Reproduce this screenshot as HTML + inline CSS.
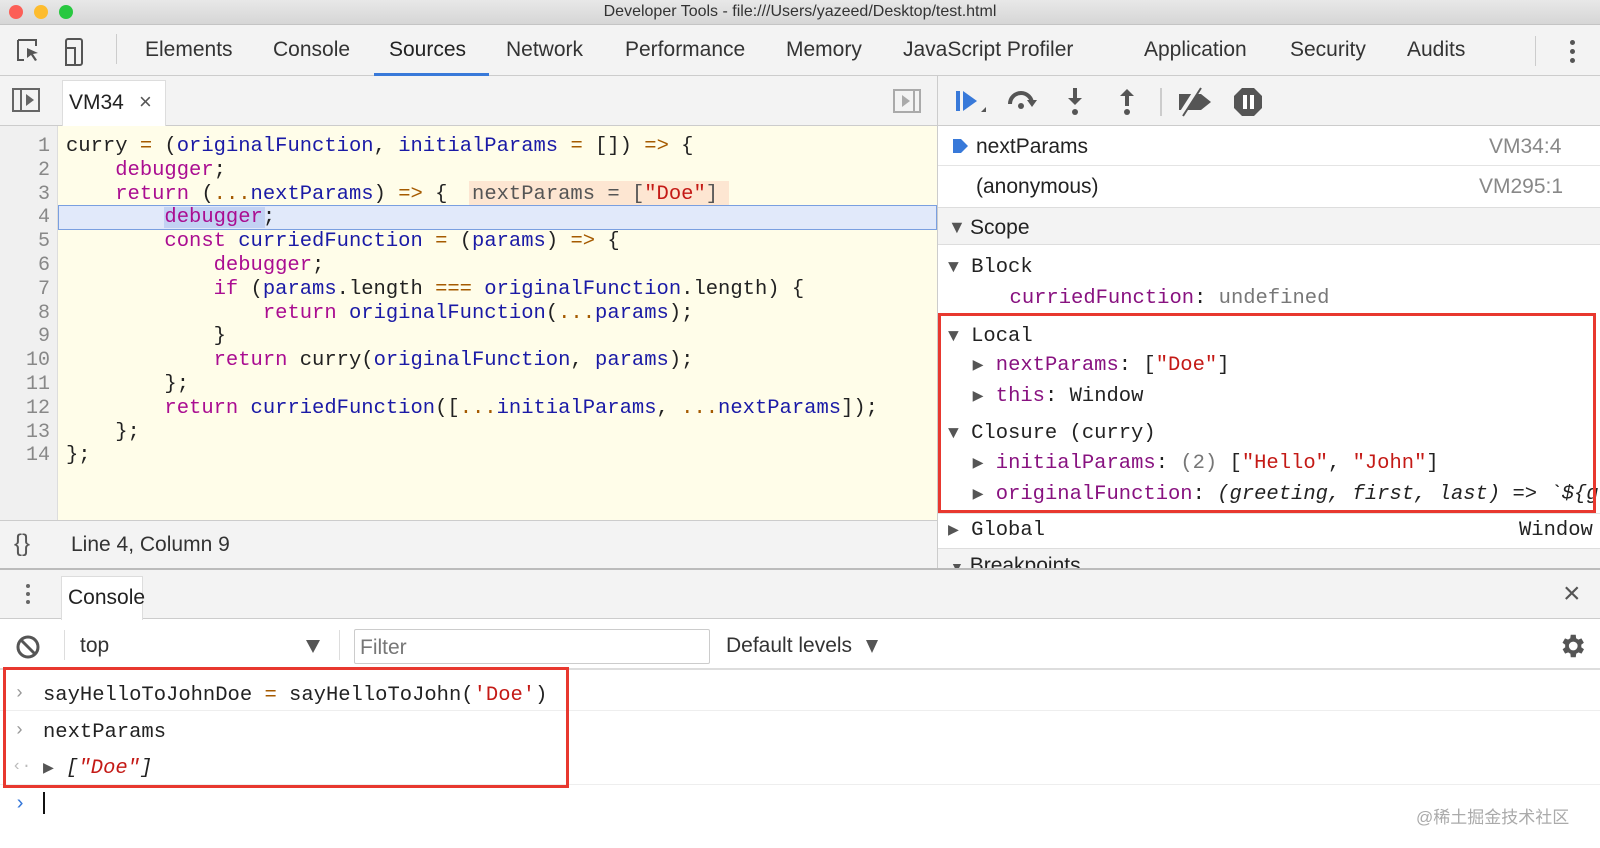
<!DOCTYPE html>
<html><head><meta charset="utf-8"><style>
*{margin:0;padding:0;box-sizing:border-box}
body{width:1600px;height:848px;overflow:hidden;background:#fff;font-family:"Liberation Sans",sans-serif;color:#333;position:relative}
.a{position:absolute;white-space:pre}
.m{font-family:"Liberation Mono",monospace;font-size:20.5px}
.s{font-size:21px}
.kw{color:#aa0d91}.v{color:#1c00cf}.id{color:#1a1aa6}.op{color:#a55a00}.str{color:#c41a16}.pu{color:#881280}.gr{color:#777}
.t{font-size:18px;color:#555}
</style></head><body>
<div class="a" style="left:0;top:0;width:1600px;height:25px;background:linear-gradient(#e8e8e8,#d6d6d6);border-bottom:1px solid #c4c4c4"></div>
<div class="a" style="left:9px;top:5px;width:14px;height:14px;border-radius:50%;background:#fc5f57"></div>
<div class="a" style="left:34px;top:5px;width:14px;height:14px;border-radius:50%;background:#fdbc2e"></div>
<div class="a" style="left:59px;top:5px;width:14px;height:14px;border-radius:50%;background:#28c840"></div>
<div class="a" style="left:0;top:3px;width:1600px;text-align:center;font-size:16px;color:#333">Developer Tools - file:///Users/yazeed/Desktop/test.html</div>
<div class="a" style="left:0;top:25px;width:1600px;height:51px;background:#f3f3f3;border-bottom:1px solid #ccc"></div>
<svg class="a" style="left:14px;top:36px" width="90" height="32" viewBox="0 0 90 32"><path d="M4 4h18v6M4 4v20h6" fill="none" stroke="#555" stroke-width="2"/><path d="M13 12l11 5-5 1 4 6-2 1-4-6-4 3z" fill="#555"/><rect x="52" y="3" width="16" height="26" rx="2" fill="none" stroke="#555" stroke-width="2"/><rect x="52" y="12" width="9" height="17" fill="#f3f3f3" stroke="#555" stroke-width="2"/></svg>
<div class="a" style="left:116px;top:34px;width:1px;height:30px;background:#ccc"></div>
<div class="a s" style="left:145px;top:38px;color:#333">Elements</div>
<div class="a s" style="left:273px;top:38px">Console</div>
<div class="a s" style="left:389px;top:38px;color:#222">Sources</div>
<div class="a" style="left:374px;top:73px;width:115px;height:3px;background:#3879d9"></div>
<div class="a s" style="left:506px;top:38px">Network</div>
<div class="a s" style="left:625px;top:38px">Performance</div>
<div class="a s" style="left:786px;top:38px">Memory</div>
<div class="a s" style="left:903px;top:38px">JavaScript Profiler</div>
<div class="a s" style="left:1144px;top:38px">Application</div>
<div class="a s" style="left:1290px;top:38px">Security</div>
<div class="a s" style="left:1407px;top:38px">Audits</div>
<div class="a" style="left:1535px;top:36px;width:1px;height:30px;background:#ccc"></div>
<div class="a" style="left:1570px;top:40px;width:5px;height:5px;border-radius:50%;background:#555;box-shadow:0 9px #555,0 18px #555"></div>
<div class="a" style="left:0;top:76px;width:937px;height:50px;background:#f3f3f3;border-bottom:1px solid #ccc"></div>
<div class="a" style="left:12px;top:88px;width:28px;height:24px;border:2px solid #666"></div>
<div class="a" style="left:20px;top:88px;width:2px;height:24px;background:#666"></div>
<div class="a" style="left:26px;top:94px;border-left:8px solid #666;border-top:6px solid transparent;border-bottom:6px solid transparent"></div>
<div class="a" style="left:62px;top:80px;width:104px;height:47px;background:#fff;border:1px solid #ddd;border-bottom:none"></div>
<div class="a s" style="left:69px;top:91px;color:#222">VM34</div>
<div class="a" style="left:139px;top:89px;font-size:22px;color:#555">×</div>
<div class="a" style="left:893px;top:89px;width:28px;height:24px;border:2px solid #aaa"></div>
<div class="a" style="left:913px;top:89px;width:2px;height:24px;background:#aaa"></div>
<div class="a" style="left:902px;top:95px;border-left:8px solid #aaa;border-top:6px solid transparent;border-bottom:6px solid transparent"></div>
<div class="a" style="left:938px;top:76px;width:662px;height:50px;background:#f3f3f3;border-bottom:1px solid #ccc"></div>
<svg class="a" style="left:950px;top:84px" width="320" height="36" viewBox="0 0 320 36">
<rect x="6" y="7" width="4" height="20" fill="#3879d9"/><path d="M13 7l14 10-14 10z" fill="#3879d9"/><path d="M31 28l5-5v5z" fill="#555"/>
<path d="M60 20a11 11 0 0 1 22 0" fill="none" stroke="#555" stroke-width="4"/><path d="M77 16h10l-5 7z" fill="#555"/><circle cx="71" cy="22" r="3" fill="#555"/>
<rect x="123" y="4" width="4" height="12" fill="#555"/><path d="M118 14h14l-7 7z" fill="#555"/><circle cx="125" cy="28" r="3" fill="#555"/>
<rect x="175" y="10" width="4" height="12" fill="#555"/><path d="M170 12h14l-7-7z" fill="#555"/><circle cx="177" cy="28" r="3" fill="#555"/>
<line x1="211" y1="4" x2="211" y2="32" stroke="#ccc" stroke-width="2"/>
<path d="M229 10h22l10 8-10 8h-22z" fill="#555"/><line x1="230" y1="32" x2="248" y2="4" stroke="#f3f3f3" stroke-width="5"/><line x1="233" y1="32" x2="251" y2="4" stroke="#555" stroke-width="2"/>
<path d="M292 4h12l8 8v12l-8 8h-12l-8-8v-12z" fill="#555"/><rect x="293" y="11" width="4" height="14" fill="#fff"/><rect x="300" y="11" width="4" height="14" fill="#fff"/>
</svg>
<div class="a" style="left:0;top:126px;width:58px;height:394px;background:#f0f0f0;border-right:1px solid #ddd"></div>
<div class="a" style="left:58px;top:126px;width:879px;height:394px;background:#fffde9"></div>
<div class="a" style="left:58px;top:205px;width:879px;height:25px;background:#e1e9fa;border:1.5px solid #7a9fe0"></div>
<div class="a" style="left:164px;top:207px;width:101px;height:21px;background:#c3d2f3"></div>
<div class="a" style="left:469px;top:181px;width:260px;height:24px;background:#fde6d2"></div>
<div class="a m" style="left:66px;top:135px;line-height:23.8px;color:#222">curry <span class="op">=</span> (<span class="id">originalFunction</span>, <span class="id">initialParams</span> <span class="op">=</span> []) <span class="op">=&gt;</span> {
    <span class="kw">debugger</span>;
    <span class="kw">return</span> (<span class="op">...</span><span class="id">nextParams</span>) <span class="op">=&gt;</span> {  <span style="color:#555">nextParams = [<span class="str">"Doe"</span>]</span>
        <span class="kw">debugger</span>;
        <span class="kw">const</span> <span class="id">curriedFunction</span> <span class="op">=</span> (<span class="id">params</span>) <span class="op">=&gt;</span> {
            <span class="kw">debugger</span>;
            <span class="kw">if</span> (<span class="id">params</span>.length <span class="op">===</span> <span class="id">originalFunction</span>.length) {
                <span class="kw">return</span> <span class="id">originalFunction</span>(<span class="op">...</span><span class="id">params</span>);
            }
            <span class="kw">return</span> curry(<span class="id">originalFunction</span>, <span class="id">params</span>);
        };
        <span class="kw">return</span> <span class="id">curriedFunction</span>([<span class="op">...</span><span class="id">initialParams</span>, <span class="op">...</span><span class="id">nextParams</span>]);
    };
};</div>
<div class="a" style="left:0;top:135px;width:50px;text-align:right;font-family:'Liberation Mono',monospace;font-size:20px;line-height:23.8px;color:#888">1
2
3
4
5
6
7
8
9
10
11
12
13
14</div>
<div class="a" style="left:0;top:520px;width:937px;height:48px;background:#f3f3f3;border-top:1px solid #ccc"></div>
<div class="a" style="left:14px;top:530px;font-size:24px;color:#555">{}</div>
<div class="a s" style="left:71px;top:533px;color:#333">Line 4, Column 9</div>
<div class="a" style="left:937px;top:76px;width:1px;height:492px;background:#ccc"></div>
<div class="a" style="left:953px;top:139px;width:8px;height:14px;background:#3879d9"></div>
<div class="a" style="left:961px;top:139px;border-left:7px solid #3879d9;border-top:7px solid transparent;border-bottom:7px solid transparent"></div>
<div class="a s" style="left:976px;top:135px;color:#222">nextParams</div>
<div class="a s" style="left:1489px;top:135px;color:#888">VM34:4</div>
<div class="a" style="left:938px;top:165px;width:662px;height:1px;background:#e4e4e4"></div>
<div class="a s" style="left:976px;top:175px;color:#222">(anonymous)</div>
<div class="a s" style="left:1479px;top:175px;color:#888">VM295:1</div>
<div class="a" style="left:938px;top:207px;width:662px;height:38px;background:#f3f3f3;border-top:1px solid #ddd;border-bottom:1px solid #ddd"></div>
<div class="a t" style="left:948px;top:217px">▼</div>
<div class="a s" style="left:970px;top:216px;color:#222">Scope</div>
<div class="a m" style="left:948px;top:256px;color:#222"><span class="t">▼</span> Block</div>
<div class="a m" style="left:948px;top:287px;color:#222">     <span class="pu">curriedFunction</span>: <span class="gr">undefined</span></div>
<div class="a m" style="left:948px;top:325px;color:#222"><span class="t">▼</span> Local</div>
<div class="a m" style="left:948px;top:354px;color:#222">  <span class="t">▶</span> <span class="pu">nextParams</span>: [<span class="str">"Doe"</span>]</div>
<div class="a m" style="left:948px;top:385px;color:#222">  <span class="t">▶</span> <span class="pu">this</span>: Window</div>
<div class="a m" style="left:948px;top:422px;color:#222"><span class="t">▼</span> Closure (curry)</div>
<div class="a m" style="left:948px;top:452px;color:#222">  <span class="t">▶</span> <span class="pu">initialParams</span>: <span class="gr">(2)</span> [<span class="str">"Hello"</span>, <span class="str">"John"</span>]</div>
<div class="a m" style="left:948px;top:483px;color:#222">  <span class="t">▶</span> <span class="pu">originalFunction</span>: <i>(greeting, first, last) =&gt; `${g</i></div>
<div class="a" style="left:938px;top:513px;width:662px;height:1px;background:#e4e4e4"></div>
<div class="a m" style="left:948px;top:519px;color:#222"><span class="t">▶</span> Global</div>
<div class="a m" style="left:1519px;top:519px;color:#222">Window</div>
<div class="a" style="left:938px;top:548px;width:662px;height:20px;background:#f3f3f3;border-top:1px solid #ddd;overflow:hidden"><div class="a s" style="left:12px;top:5px;color:#222"><span style="font-size:14px;color:#555">▼</span> Breakpoints</div></div>
<div class="a" style="left:938px;top:313px;width:658px;height:200px;border:3px solid #e8382f"></div>
<div class="a" style="left:0;top:568px;width:1600px;height:51px;background:#f3f3f3;border-top:2px solid #bbb;border-bottom:1px solid #ccc"></div>
<div class="a" style="left:26px;top:584px;width:4px;height:4px;border-radius:50%;background:#666;box-shadow:0 8px #666,0 16px #666"></div>
<div class="a" style="left:61px;top:576px;width:82px;height:44px;background:#fff;border:1px solid #ddd;border-bottom:none"></div>
<div class="a s" style="left:68px;top:586px;color:#222">Console</div>
<div class="a" style="left:1563px;top:577px;font-size:30px;color:#555">×</div>
<div class="a" style="left:0;top:619px;width:1600px;height:51px;border-bottom:2px solid #ddd"></div>
<svg class="a" style="left:15px;top:634px" width="26" height="26"><circle cx="13" cy="13" r="10" fill="none" stroke="#555" stroke-width="3"/><line x1="6" y1="6" x2="20" y2="20" stroke="#555" stroke-width="3"/></svg>
<div class="a" style="left:64px;top:630px;width:1px;height:30px;background:#ddd"></div>
<div class="a s" style="left:80px;top:634px;color:#333">top</div>
<div class="a" style="left:306px;top:640px;border-top:13px solid #555;border-left:7px solid transparent;border-right:7px solid transparent"></div>
<div class="a" style="left:339px;top:630px;width:1px;height:30px;background:#ddd"></div>
<div class="a" style="left:354px;top:629px;width:356px;height:35px;border:1px solid #ccc;border-radius:2px"></div>
<div class="a s" style="left:360px;top:636px;color:#777">Filter</div>
<div class="a s" style="left:726px;top:634px;color:#333">Default levels</div>
<div class="a" style="left:866px;top:640px;border-top:13px solid #555;border-left:6px solid transparent;border-right:6px solid transparent"></div>
<svg class="a" style="left:1557px;top:631px" width="30" height="30" viewBox="0 0 24 24"><path fill="#555" d="M19.4 13a7.5 7.5 0 0 0 0-2l2.1-1.6-2-3.5-2.5 1a7 7 0 0 0-1.7-1L15 3h-4l-.4 2.9a7 7 0 0 0-1.7 1l-2.5-1-2 3.5L6.6 11a7.5 7.5 0 0 0 0 2l-2.1 1.6 2 3.5 2.5-1a7 7 0 0 0 1.7 1L11 21h4l.4-2.9a7 7 0 0 0 1.7-1l2.5 1 2-3.5zM13 15.5a3.5 3.5 0 1 1 0-7 3.5 3.5 0 0 1 0 7z"/></svg>
<div class="a" style="left:0;top:710px;width:1600px;height:1px;background:#eee"></div>
<div class="a" style="left:0;top:784px;width:1600px;height:1px;background:#eee"></div>
<div class="a m" style="left:14px;top:684px;color:#999;font-size:18px">›</div>
<div class="a m" style="left:43px;top:684px;color:#222">sayHelloToJohnDoe <span class="op">=</span> sayHelloToJohn(<span class="str">'Doe'</span>)</div>
<div class="a m" style="left:14px;top:721px;color:#999;font-size:18px">›</div>
<div class="a m" style="left:43px;top:721px;color:#222">nextParams</div>
<div class="a m" style="left:12px;top:757px;color:#bbb;font-size:16px">‹·</div>
<div class="a m" style="left:43px;top:757px;color:#222"><span class="t">▶</span> <i>[<span class="str">"Doe"</span>]</i></div>
<div class="a" style="left:3px;top:667px;width:566px;height:121px;border:3px solid #e8382f"></div>
<div class="a m" style="left:14px;top:793px;color:#3879d9;font-size:20px">›</div>
<div class="a" style="left:43px;top:792px;width:2px;height:22px;background:#111"></div>
<div class="a" style="left:1416px;top:803px;font-family:'Liberation Sans','Noto Sans CJK SC',sans-serif;font-size:17px;color:#aaa">@稀土掘金技术社区</div>
</body></html>
